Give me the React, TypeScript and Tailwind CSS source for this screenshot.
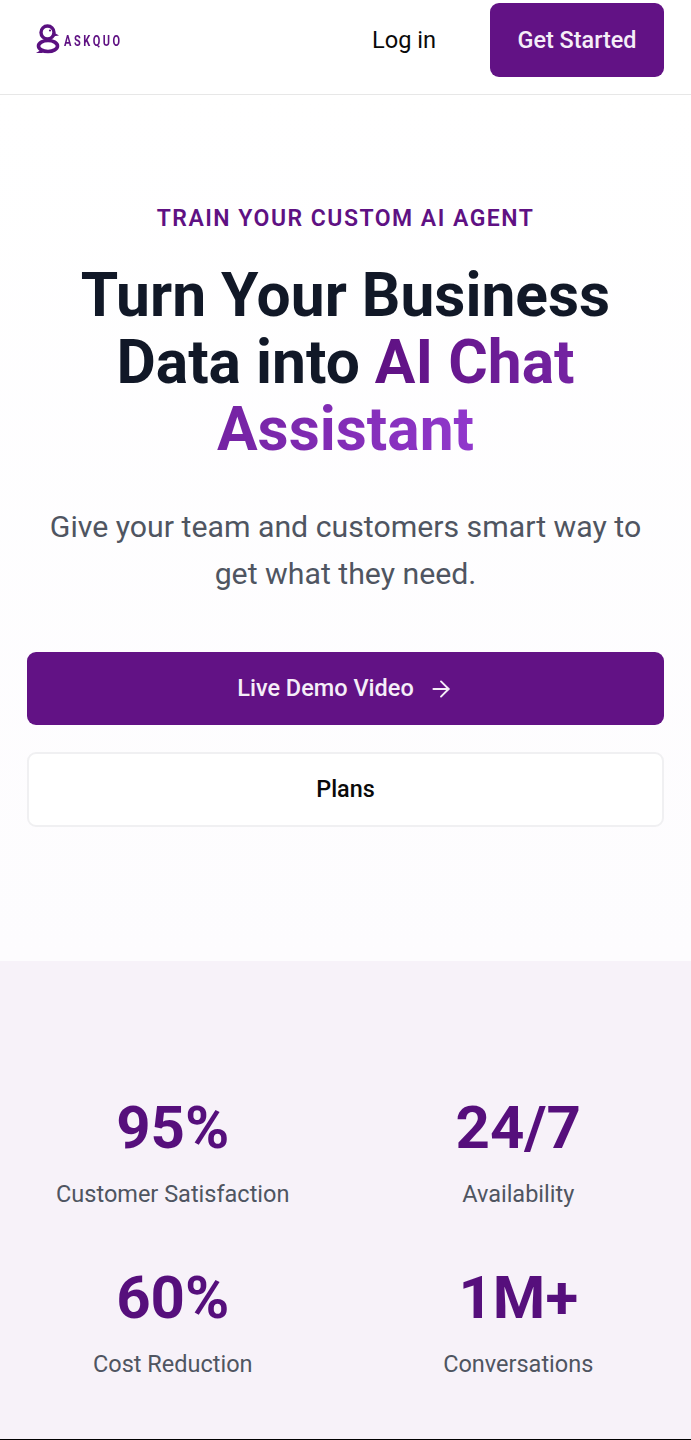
import { ArrowRight } from 'lucide-react'

const stats = [
  { value: '95%', label: 'Customer Satisfaction' },
  { value: '24/7', label: 'Availability' },
  { value: '60%', label: 'Cost Reduction' },
  { value: '1M+', label: 'Conversations' },
]

function Logo() {
  return (
    <div className="flex items-center">
      <svg width="26" height="30" viewBox="0 0 26 30" fill="none" className="text-[#5a1080]">
        <circle cx="11.500" cy="8.500" r="6.500" stroke="currentColor" strokeWidth="3.400" />
        <ellipse cx="12" cy="22" rx="9.500" ry="5.500" stroke="currentColor" strokeWidth="3.600" />
        <path d="M17 8l6 3.500-7 1Z" fill="currentColor" />
        <path d="M0 29l5-3 2 3Z" fill="currentColor" />
        <circle cx="14" cy="6.500" r="1.100" fill="currentColor" />
      </svg>
      <span className="ml-[2px] mt-[6px] origin-center scale-y-[1.3] font-['Roboto',sans-serif] text-[11px] font-bold tracking-[2.550px] text-[#5f1183]">ASKQUO</span>
    </div>
  )
}

export default function App() {
  return (
    <div className="min-h-screen bg-white font-['Roboto',sans-serif]">
      <header className="flex h-[95px] items-start justify-between border-b border-[#e7e7e7] pl-[36px] pr-[27px] pt-[3px]">
        <div className="pt-[21px]">
          <Logo />
        </div>
        <div className="flex items-center gap-[27px]">
          <a className="px-[27px] pt-[1px] text-[23.600px] text-[#0a0a0a]">Log in</a>
          <button className="h-[74px] w-[174px] rounded-[9px] bg-[#621285] pt-[1px] text-[23.400px] font-medium text-[#f5eef8]">Get Started</button>
        </div>
      </header>

      <section className="flex h-[866px] flex-col items-center bg-gradient-to-b from-white to-[#fdfcfe] px-[27px] pt-[107px]">
        <p className="text-[23px] font-semibold tracking-[1.480px] text-[#5f1183]">TRAIN YOUR CUSTOM AI AGENT</p>
        <h1 className="mt-[25px] text-center text-[60.500px] font-bold leading-[67px] text-[#111827]">
          Turn Your Business
          <br />
          Data into{' '}
          <span className="bg-gradient-to-r from-[#5f1183] to-[#9138cc] bg-clip-text text-transparent">
            AI Chat Assistant
          </span>
        </h1>
        <p className="mt-[40px] text-center text-[30.250px] leading-[47px] text-[#4f5561]">
          Give your team and customers smart way to
          <br />
          get what they need.
        </p>
        <button className="mt-[55px] flex h-[73px] w-full items-center justify-center gap-[14px] rounded-[9px] bg-[#621285] pt-[1px] text-[23.500px] font-medium text-[#f5eef8]">
          Live Demo Video
          <ArrowRight size={26} strokeWidth={1.800} />
        </button>
        <button className="mt-[27px] h-[75px] w-full rounded-[9px] border-2 border-[#f0f0f2] bg-white pt-[1px] text-[23.400px] font-medium text-[#0a0a0a]">
          Plans
        </button>
      </section>

      <section className="grid h-[479px] grid-cols-2 content-start gap-y-[53px] border-b border-black bg-[#f7f2f9] pt-[132px]">
        {stats.map(s => (
          <div key={s.label} className="flex flex-col items-center">
            <div className="text-[60px] font-bold leading-[70px] text-[#560f7c]">{s.value}</div>
            <div className="mt-[16px] mb-[1px] text-[23.500px] leading-[30px] text-[#4f5561]">{s.label}</div>
          </div>
        ))}
      </section>
    </div>
  )
}
